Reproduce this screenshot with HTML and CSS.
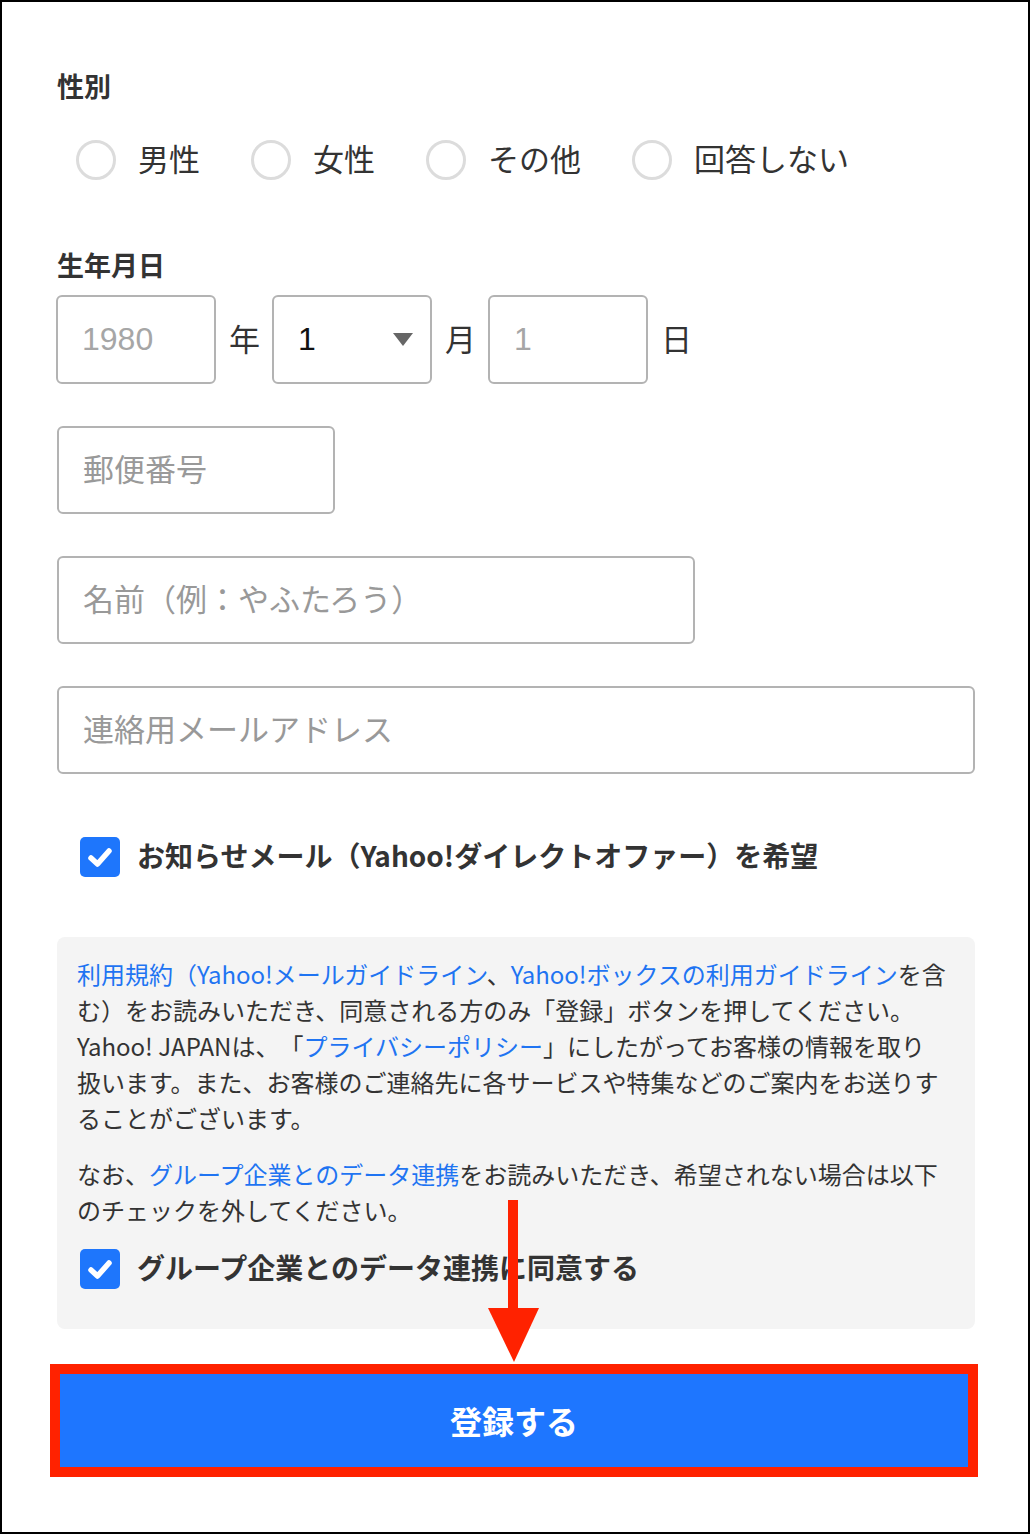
FILE: index.html
```html
<!DOCTYPE html>
<html lang="ja">
<head>
<meta charset="utf-8">
<title>登録フォーム</title>
<link rel="stylesheet" href="styles.css">
</head>
<body>
<div class="frame">
  <div class="form">
    <div class="section-label first">性別</div>
    <div class="radios">
      <label class="radio"><span class="circle"></span><span class="radio-text">男性</span></label>
      <label class="radio"><span class="circle"></span><span class="radio-text">女性</span></label>
      <label class="radio"><span class="circle"></span><span class="radio-text">その他</span></label>
      <label class="radio"><span class="circle"></span><span class="radio-text">回答しない</span></label>
    </div>

    <div class="section-label birth">生年月日</div>
    <div class="date-row">
      <div class="field date"><span class="placeholder num">1980</span></div>
      <span class="unit">年</span>
      <div class="field date select"><span class="value num">1</span><span class="tri"></span></div>
      <span class="unit">月</span>
      <div class="field date"><span class="placeholder num">1</span></div>
      <span class="unit">日</span>
    </div>

    <div class="field postal"><span class="placeholder">郵便番号</span></div>
    <div class="field name"><span class="placeholder">名前（例：やふたろう）</span></div>
    <div class="field email"><span class="placeholder">連絡用メールアドレス</span></div>

    <div class="check-row news">
      <span class="checkbox"><svg width="40" height="40" viewBox="0 0 40 40"><path d="M11 21 L17.5 27 L29 14" fill="none" stroke="#fff" stroke-width="5.5" stroke-linecap="round" stroke-linejoin="round"/></svg></span>
      <span class="check-text">お知らせメール（Yahoo!ダイレクトオファー）を希望</span>
    </div>

    <div class="terms">
      <p class="terms-p"><a class="link">利用規約（Yahoo!メールガイドライン</a>、<a class="link">Yahoo!ボックスの利用ガイドライン</a>を含<br>む）をお読みいただき、同意される方のみ「登録」ボタンを押してください。<br>Yahoo! JAPANは、「<a class="link">プライバシーポリシー</a>」にしたがってお客様の情報を取り<br>扱います。また、お客様のご連絡先に各サービスや特集などのご案内をお送りす<br>ることがございます。</p>
      <p class="terms-p second">なお、<a class="link">グループ企業とのデータ連携</a>をお読みいただき、希望されない場合は以下<br>のチェックを外してください。</p>
      <div class="check-row group">
        <span class="checkbox"><svg width="40" height="40" viewBox="0 0 40 40"><path d="M11 21 L17.5 27 L29 14" fill="none" stroke="#fff" stroke-width="5.5" stroke-linecap="round" stroke-linejoin="round"/></svg></span>
        <span class="check-text">グループ企業とのデータ連携に同意する</span>
      </div>
    </div>

    <div class="highlight">
      <button class="submit">登録する</button>
    </div>
  </div>

  <svg class="arrow" width="52" height="162" viewBox="0 0 52 162">
    <rect x="20" y="0" width="10" height="112" fill="#ff2200"/>
    <polygon points="0,108 51,108 26,162" fill="#ff2200"/>
  </svg>
</div>
</body>
</html>
```

FILE: styles.css
```css
html, body {
  margin: 0;
  padding: 0;
  background: #fff;
}

.frame {
  position: relative;
  width: 1030px;
  height: 1534px;
  box-sizing: border-box;
  border: 2px solid #000;
  padding-left: 55px;
  background: #fff;
  font-family: "Noto Sans CJK JP", "Liberation Sans", sans-serif;
  color: #333;
  overflow: hidden;
  text-spacing-trim: space-all;
}

.form {
  display: flex;
  flex-direction: column;
  align-items: flex-start;
  width: 918px;
}

.section-label {
  font-size: 27px;
  font-weight: 700;
  line-height: 36px;
  color: #333;
}

.section-label.first {
  margin-top: 66px;
}

.section-label.birth {
  margin-top: 67px;
}

.radios {
  display: flex;
  align-items: center;
  gap: 51px;
  margin-top: 36px;
  margin-left: 19px;
  height: 40px;
}

.radio {
  display: flex;
  align-items: center;
  gap: 22px;
}

.circle {
  width: 40px;
  height: 40px;
  box-sizing: border-box;
  border: 3px solid #dcdcdc;
  border-radius: 50%;
  background: #fff;
}

.radio-text {
  font-size: 31px;
  line-height: 40px;
  color: #333;
  padding-bottom: 4px;
}

.date-row {
  display: flex;
  align-items: center;
  gap: 13px;
  margin-top: 12px;
  margin-left: -1px;
}

.field {
  box-sizing: border-box;
  height: 88px;
  border: 2px solid #b3b3b3;
  border-radius: 6px;
  background: #fff;
  display: flex;
  align-items: center;
  padding-left: 24px;
  padding-bottom: 6px;
}

.field.date {
  width: 160px;
  height: 89px;
  padding-bottom: 0;
}

.field.select {
  justify-content: space-between;
  padding-right: 17px;
}

.unit {
  font-size: 31px;
  line-height: 40px;
  color: #333;
  width: 30px;
  padding-bottom: 4px;
}

.placeholder {
  font-size: 31px;
  color: #999;
}

.num {
  font-family: "Liberation Sans", Arial, sans-serif;
  font-size: 32px;
}

.value {
  color: #111;
}

.placeholder.num {
  color: #a6a6a6;
}

.tri {
  width: 0;
  height: 0;
  border-left: 10px solid transparent;
  border-right: 10px solid transparent;
  border-top: 13px solid #666;
}

.field.postal {
  width: 278px;
  margin-top: 42px;
}

.field.name {
  width: 638px;
  margin-top: 42px;
}

.field.email {
  width: 918px;
  margin-top: 42px;
}

.check-row {
  display: flex;
  align-items: center;
  gap: 17px;
  height: 40px;
}

.check-row.news {
  margin-top: 63px;
  margin-left: 23px;
}

.checkbox {
  width: 40px;
  height: 40px;
  border-radius: 5px;
  background: #1e76fc;
  display: block;
}

.checkbox svg {
  display: block;
}

.check-text {
  font-size: 28px;
  font-weight: 700;
  line-height: 40px;
  color: #333;
  white-space: nowrap;
  padding-bottom: 5px;
}

.terms {
  box-sizing: border-box;
  width: 918px;
  margin-top: 60px;
  padding: 19px 20px 40px 20px;
  background: #f4f4f4;
  border-radius: 8px;
}

.terms-p {
  margin: 0;
  font-size: 24px;
  line-height: 36px;
  color: #333;
  white-space: nowrap;
}

.terms-p.second {
  margin-top: 20px;
}

.link {
  color: #1f74f2;
  text-decoration: none;
}

.check-row.group {
  margin-top: 21px;
  margin-left: 3px;
}

.highlight {
  margin-top: 35px;
  margin-left: -7px;
  width: 928px;
  box-sizing: border-box;
  border: 10px solid #ff2200;
}

.submit {
  display: block;
  width: 100%;
  height: 93px;
  border: none;
  margin: 0;
  padding: 0 0 2px 0;
  background: #1e76ff;
  color: #fff;
  font-family: "Noto Sans CJK JP", sans-serif;
  font-size: 32px;
  font-weight: 700;
  text-align: center;
}

.arrow {
  position: absolute;
  left: 486px;
  top: 1198px;
  display: block;
}
```
